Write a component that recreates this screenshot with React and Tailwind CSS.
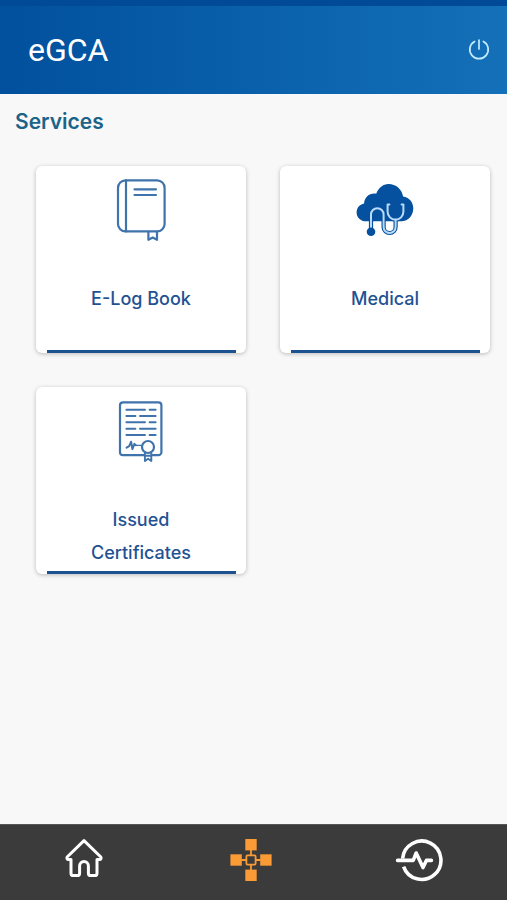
import { useState } from "react";

function PowerIcon() {
  return (
    <svg width="22" height="22" viewBox="0 0 22 22" fill="none" stroke="#c4ecff" strokeWidth="1.7" strokeLinecap="round">
      <path d="M11 1v9" />
      <path d="M6.6 2.4a9.2 9.2 0 1 0 8.800 0" />
    </svg>
  );
}

function BookIcon() {
  return (
    <svg width="70" height="80" viewBox="0 0 70 80" fill="none" stroke="#3f73ab" strokeWidth="2.2" strokeLinecap="round" strokeLinejoin="round">
      <rect x="12" y="10.4" width="46.6" height="51" rx="7.5" />
      <path d="M20 10.4v51" />
      <path d="M28.5 19.3h21.5M28.5 25h21.5" />
      <path d="M42.4 61.8v8l4.3-2.2 4.3 2.2v-8" />
    </svg>
  );
}

function MedicalIcon() {
  const tube = "M21 60V44.5a6.3 6.3 0 0 1 12.6 0V57a6 6 0 0 0 12 0v-7.5";
  const fork = "M39.4 34.4h-1.8v7.4a7.9 7.9 0 0 0 15.8 0v-7.4h-1.8";
  return (
    <svg width="70" height="80" viewBox="0 0 70 80" fill="none" strokeLinecap="round" strokeLinejoin="round">
      <path
        d="M16.2 51.2C10.6 51.2 6.6 47.4 6.6 42.4c0-4.6 3.1-8.1 7.5-9 .3-5.8 4.7-9.9 10.2-9.9.7 0 1.3.1 1.9.2C28.6 17.8 33 14 38.5 14c7.5 0 13.5 5.3 14.6 12.6 5.8.7 10.2 5.6 10.2 11.7 0 7.2-5 12.9-11.8 12.9z"
        fill="#05509f"
      />
      <path d={tube} stroke="#05509f" strokeWidth="4.2" />
      <path d={fork} stroke="#05509f" strokeWidth="4.2" />
      <path d={tube} stroke="#b9dbf8" strokeWidth="2" />
      <path d={fork} stroke="#b9dbf8" strokeWidth="2" />
      <circle cx="21" cy="61.8" r="4.3" fill="#05509f" />
    </svg>
  );
}

function CertificateIcon() {
  return (
    <svg width="70" height="80" viewBox="0 0 70 80" fill="none" stroke="#3f73ab" strokeWidth="2.2" strokeLinecap="round" strokeLinejoin="round">
      <path d="M38 64.2H17a3 3 0 0 1-3-3V14.3a3 3 0 0 1 3-3h35.4a3 3 0 0 1 3 3v46.9a3 3 0 0 1-3 3H46.5" />
      <path
        d="M20.4 18.7H39M43.6 18.7h6M20.4 25h9M34 25h15.6M20.4 31.3H39M43.6 31.3h6M20.4 37.7h9M34 37.7h15.6M20.4 44H39M43.6 44h6"
        strokeWidth="2"
      />
      <path d="M20.6 56.7l2.6-1.6 1.9-4.4 1.3 7.4 2-5.2 1.4 1.4" strokeWidth="2" />
      <path d="M30 54.3h6" strokeWidth="1.2" />
      <circle cx="42" cy="56" r="6" fill="#fff" />
      <path d="M38.9 62v8l3.2-2.2 3.2 2.200V62M39 64.800h6" strokeWidth="1.9" />
    </svg>
  );
}

function HomeIcon() {
  return (
    <svg width="46" height="46" viewBox="0 0 46 46" fill="none" stroke="#fff" strokeWidth="3" strokeLinecap="round" strokeLinejoin="round">
      <path d="M23 3.6L6.4 19.8c-1 1.1-.4 2.800 1.200 2.800h2.400v13.600a2.400 2.400 0 0 0 2.400 2.400h3.800a2.400 2.400 0 0 0 2.400-2.400v-7.400a4.400 4.400 0 0 1 8.800 0v7.400a2.400 2.400 0 0 0 2.400 2.400h3.800a2.400 2.400 0 0 0 2.400-2.400V22.600h2.400c1.600 0 2.200-1.700 1.200-2.800z" />
    </svg>
  );
}

function ServicesIcon() {
  return (
    <svg width="46" height="46" viewBox="0 0 46 46" fill="#fb9b36">
      <rect x="17.3" y="2" width="11.4" height="11.4" />
      <rect x="2.4" y="17.3" width="11.4" height="11.4" />
      <rect x="32.2" y="17.3" width="11.4" height="11.4" />
      <rect x="17.3" y="32.6" width="11.4" height="11.4" />
      <g fill="none" stroke="#fb9b36" strokeWidth="1.8">
        <rect x="18.4" y="18.4" width="9.2" height="9.2" rx="1" />
        <path d="M23 13v5M23 28v5M13.5 23h5M27.5 23h5" />
      </g>
    </svg>
  );
}

function PulseIcon() {
  return (
    <svg width="48" height="46" viewBox="0 0 48 46" fill="none" stroke="#fff" strokeWidth="3.6" strokeLinecap="round" strokeLinejoin="round">
      <path d="M7.6 21.6A19.200 19.200 0 1 1 8.600 29.600" strokeLinecap="butt" />
      <path d="M2.600 23.400h15.600l3-7.400 6.800 14.600 3.400-7.200h5" />
    </svg>
  );
}

const services = [
  { id: "logbook", label: "E-Log Book", Icon: BookIcon },
  { id: "medical", label: "Medical", Icon: MedicalIcon },
  { id: "certificates", label: "Issued Certificates", Icon: CertificateIcon },
];

const tabs = [
  { id: "home", label: "Home", Icon: HomeIcon },
  { id: "services", label: "Services", Icon: ServicesIcon },
  { id: "activity", label: "Activity", Icon: PulseIcon },
];

function ServiceCard({ label, Icon }) {
  return (
    <button
      type="button"
      className="flex flex-col items-center rounded-md bg-white pt-1 shadow-[0_1px_4px_rgba(0,0,0,0.25)]"
    >
      <Icon />
      <span className="mt-8 mb-0.5 min-h-[66px] max-w-32 text-center text-lg leading-[33px] font-medium text-[#1f5293]">
        {label}
      </span>
      <span className="mt-auto h-[3px] w-[90%] bg-[#1d5290]" />
    </button>
  );
}

export default function App() {
  const [active, setActive] = useState("services");

  return (
    <div className="flex min-h-screen flex-col bg-[#f8f8f8] font-['Inter',sans-serif]">
      {/* Header */}
      <header className="border-t-[6px] border-[#014a97] bg-linear-to-r from-[#02509d] via-[#0a60ab] to-[#1470b8]">
        <div className="flex h-[88px] items-center justify-between pr-[17px] pl-7">
          <h1 className="font-['Roboto',sans-serif] text-[32px] font-normal text-white">eGCA</h1>
          <button type="button" aria-label="Log out">
            <PowerIcon />
          </button>
        </div>
      </header>

      {/* Services */}
      <main className="flex-1 pb-8">
        <h2 className="px-[15px] pt-3 text-[21px] leading-8 font-semibold text-[#1b6388]">Services</h2>
        <div className="mt-7 grid grid-cols-2 gap-[34px] pr-[17px] pl-9">
          {services.map((service) => (
            <ServiceCard key={service.id} label={service.label} Icon={service.Icon} />
          ))}
        </div>
      </main>

      {/* Bottom navigation */}
      <nav className="grid h-[76px] grid-cols-3 border-t border-[#555] bg-[#3b3b3b] pr-1">
        {tabs.map(({ id, label, Icon }) => (
          <button
            key={id}
            type="button"
            aria-label={label}
            aria-current={active === id ? "page" : undefined}
            onClick={() => setActive(id)}
            className="flex items-start justify-center pt-3"
          >
            <Icon />
          </button>
        ))}
      </nav>
    </div>
  );
}
